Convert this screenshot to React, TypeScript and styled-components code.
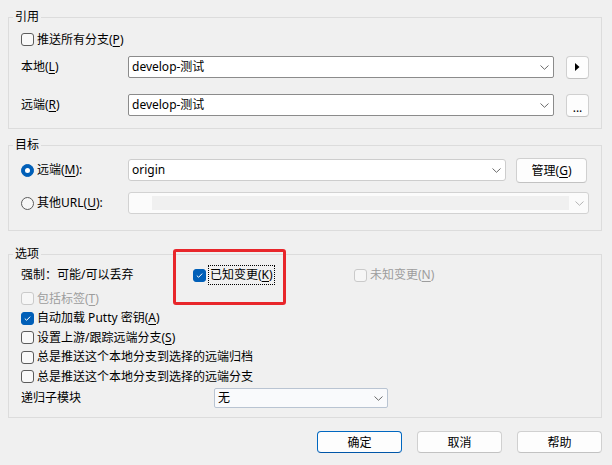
import styled, { createGlobalStyle } from "styled-components";

const GlobalStyle = createGlobalStyle`
  html, body {
    margin: 0;
    padding: 0;
    background: #f0f0f0;
  }
  body {
    font-family: "Noto Sans", "Noto Sans CJK SC", sans-serif;
    font-size: 12px;
    color: #000;
  }
`;

const Window = styled.div`
  width: 612px;
  height: 465px;
  box-sizing: border-box;
  padding: 9px 10px 0 8px;
  display: flex;
  flex-direction: column;
  background: #f0f0f0;
`;

const Group = styled.fieldset<{ $mt?: number; $pt: number; $pb: number }>`
  margin: ${(p) => p.$mt ?? 0}px 0 0 0;
  padding: ${(p) => p.$pt}px 12px ${(p) => p.$pb}px 12px;
  border: 1px solid #dcdcdc;
  min-width: 0;
  display: flex;
  flex-direction: column;
`;

const Legend = styled.legend`
  margin-left: -8px;
  padding: 0 2px;
  line-height: 16px;
  font-size: 12px;
`;

const Row = styled.div<{ $h: number; $mt?: number }>`
  display: flex;
  align-items: center;
  height: ${(p) => p.$h}px;
  margin-top: ${(p) => p.$mt ?? 0}px;
  white-space: nowrap;
`;

const FieldLabel = styled.div<{ $w: number }>`
  flex: 0 0 ${(p) => p.$w}px;
  line-height: 16px;
`;

const U = styled.u`
  text-underline-offset: 2px;
`;

/* ---------- check box / radio ---------- */

const Item = styled.label<{ $disabled?: boolean; $w?: number }>`
  position: relative;
  display: flex;
  align-items: center;
  gap: 3px;
  line-height: 16px;
  color: ${(p) => (p.$disabled ? "#9d9d9d" : "#000")};
  flex: ${(p) => (p.$w ? `0 0 ${p.$w}px` : "none")};
`;

const Box = styled.span<{ $checked?: boolean; $disabled?: boolean }>`
  width: 13px;
  height: 13px;
  box-sizing: border-box;
  border-radius: 3px;
  flex: none;
  display: inline-flex;
  align-items: center;
  justify-content: center;
  border: 1px solid
    ${(p) => (p.$checked ? "#005fb8" : p.$disabled ? "#cacaca" : "#5c5c5c")};
  background: ${(p) =>
    p.$checked ? "#005fb8" : p.$disabled ? "#f6f6f6" : "#f9f9f9"};
`;

const RadioDot = styled.span<{ $checked?: boolean }>`
  width: 13px;
  height: 13px;
  box-sizing: border-box;
  border-radius: 50%;
  flex: none;
  display: inline-flex;
  align-items: center;
  justify-content: center;
  border: 1px solid ${(p) => (p.$checked ? "#005fb8" : "#5c5c5c")};
  background: ${(p) => (p.$checked ? "#005fb8" : "#f7f7f7")};

  &::after {
    content: "";
    display: ${(p) => (p.$checked ? "block" : "none")};
    width: 5px;
    height: 5px;
    border-radius: 50%;
    background: #fff;
  }
`;

const FocusText = styled.span`
  outline: 1px dotted #000;
  outline-offset: 0;
  padding: 1px 1px;
`;

const Highlight = styled.span`
  position: absolute;
  left: -20px;
  top: -17px;
  width: 113px;
  height: 56px;
  box-sizing: border-box;
  border: 3px solid #e8262b;
  border-radius: 3px;
  pointer-events: none;
`;

function Check({
  checked,
  disabled,
  children,
}: {
  checked?: boolean;
  disabled?: boolean;
  children: React.ReactNode;
}) {
  return (
    <Box $checked={checked} $disabled={disabled}>
      {checked && (
        <svg width="9" height="9" viewBox="0 0 9 9">
          <polyline
            points="1.8,4.6 3.6,6.3 7.2,2.6"
            fill="none"
            stroke="#fff"
            strokeWidth="1"
          />
        </svg>
      )}
      {children}
    </Box>
  );
}

/* ---------- combo boxes ---------- */

const tones = {
  dark: { border: "#8b8b8b", bg: "#fff", radius: 2 },
  light: { border: "#cdcdcd", bg: "#fff", radius: 3 },
  disabled: { border: "#d2d2d2", bg: "#fbfbfb", radius: 3 },
  blue: { border: "#b9c4d2", bg: "#f9fafc", radius: 2 },
};

const Combo = styled.div<{ $tone: keyof typeof tones; $w?: number; $h?: number }>`
  flex: ${(p) => (p.$w ? `0 0 ${p.$w}px` : "1 1 auto")};
  height: ${(p) => p.$h ?? 22}px;
  box-sizing: border-box;
  display: flex;
  align-items: center;
  padding: 0 4px 0 3px;
  border: 1px solid ${(p) => tones[p.$tone].border};
  border-radius: ${(p) => tones[p.$tone].radius}px;
  background: ${(p) => tones[p.$tone].bg};
`;

const ComboText = styled.span`
  flex: 1;
  line-height: 16px;
`;

const DisabledField = styled.span`
  flex: 1;
  height: 14px;
  margin: 0 6px 0 20px;
  background: #f0f0f0;
`;

function Chevron({ color = "#6a6a6a" }: { color?: string }) {
  return (
    <svg width="9" height="5" viewBox="0 0 9 5" style={{ flex: "none" }}>
      <polyline points="0.5,0.5 4.5,4.3 8.5,0.5" fill="none" stroke={color} strokeWidth="1" />
    </svg>
  );
}

/* ---------- buttons ---------- */

const Button = styled.button<{ $w: number; $h: number; $primary?: boolean; $mr?: number }>`
  flex: none;
  width: ${(p) => p.$w}px;
  height: ${(p) => p.$h}px;
  margin-right: ${(p) => p.$mr ?? 0}px;
  box-sizing: border-box;
  padding: 0;
  display: inline-flex;
  align-items: center;
  justify-content: center;
  font-family: inherit;
  font-size: 12px;
  color: #000;
  background: #fdfdfd;
  border: 1px solid ${(p) => (p.$primary ? "#0067c0" : "#d0d0d0")};
  border-bottom-color: ${(p) => (p.$primary ? "#0056a8" : "#c2c2c2")};
  border-radius: 4px;
`;

const Gap = styled.div<{ $w: number }>`
  flex: 0 0 ${(p) => p.$w}px;
`;

const Footer = styled.div`
  display: flex;
  justify-content: flex-end;
  gap: 15px;
  margin-top: 13px;
`;

export default function App() {
  return (
    <>
      <GlobalStyle />
      <Window>
        <Group $pt={4} $pb={12}>
          <Legend>引用</Legend>
          <Row $h={21}>
            <Item>
              <Check />
              <span>
                推送所有分支(<U>P</U>)
              </span>
            </Item>
          </Row>
          <Row $h={22} $mt={6}>
            <FieldLabel $w={107}>
              本地(<U>L</U>)
            </FieldLabel>
            <Combo $tone="dark">
              <ComboText>develop-测试</ComboText>
              <Chevron />
            </Combo>
            <Gap $w={12} />
            <Button $w={23} $h={23}>
              <svg width="5" height="8" viewBox="0 0 5 8">
                <polygon points="0,0 4.5,4 0,8" fill="#000" />
              </svg>
            </Button>
          </Row>
          <Row $h={22} $mt={16}>
            <FieldLabel $w={107}>
              远端(<U>R</U>)
            </FieldLabel>
            <Combo $tone="dark">
              <ComboText>develop-测试</ComboText>
              <Chevron />
            </Combo>
            <Gap $w={12} />
            <Button $w={23} $h={23}>
              <span style={{ marginTop: 4 }}>...</span>
            </Button>
          </Row>
        </Group>

        <Group $mt={8} $pt={6} $pb={16}>
          <Legend>目标</Legend>
          <Row $h={22}>
            <Item $w={107}>
              <RadioDot $checked />
              <span>
                远端(<U>M</U>):
              </span>
            </Item>
            <Combo $tone="light">
              <ComboText>origin</ComboText>
              <Chevron />
            </Combo>
            <Gap $w={10} />
            <Button $w={71} $h={25} $mr={2}>
              管理(<U>G</U>)
            </Button>
          </Row>
          <Row $h={22} $mt={11}>
            <Item $w={107}>
              <RadioDot />
              <span>
                其他URL(<U>U</U>):
              </span>
            </Item>
            <Combo $tone="disabled">
              <DisabledField />
              <Chevron color="#b4b4b4" />
            </Combo>
          </Row>
        </Group>

        <Group $mt={15} $pt={3} $pb={9}>
          <Legend>选项</Legend>
          <Row $h={20}>
            <FieldLabel $w={172}>强制：可能/可以丢弃</FieldLabel>
            <Item $w={161}>
              <Highlight />
              <Check checked />
              <FocusText>
                已知变更(<U>K</U>)
              </FocusText>
            </Item>
            <Item $disabled>
              <Check disabled />
              <span>
                未知变更(<U>N</U>)
              </span>
            </Item>
          </Row>
          <Row $h={19.5} $mt={4}>
            <Item $disabled>
              <Check disabled />
              <span>
                包括标签(<U>T</U>)
              </span>
            </Item>
          </Row>
          <Row $h={19.5}>
            <Item>
              <Check checked />
              <span>
                自动加载 Putty 密钥(<U>A</U>)
              </span>
            </Item>
          </Row>
          <Row $h={19.5}>
            <Item>
              <Check />
              <span>
                设置上游/跟踪远端分支(<U>S</U>)
              </span>
            </Item>
          </Row>
          <Row $h={19.5}>
            <Item>
              <Check />
              <span>总是推送这个本地分支到选择的远端归档</span>
            </Item>
          </Row>
          <Row $h={19.5}>
            <Item>
              <Check />
              <span>总是推送这个本地分支到选择的远端分支</span>
            </Item>
          </Row>
          <Row $h={20} $mt={1.5}>
            <FieldLabel $w={193}>递归子模块</FieldLabel>
            <Combo $tone="blue" $w={174} $h={20}>
              <ComboText>无</ComboText>
              <Chevron />
            </Combo>
          </Row>
        </Group>

        <Footer>
          <Button $w={85} $h={22} $primary>
            确定
          </Button>
          <Button $w={85} $h={22}>
            取消
          </Button>
          <Button $w={85} $h={22}>
            帮助
          </Button>
        </Footer>
      </Window>
    </>
  );
}
